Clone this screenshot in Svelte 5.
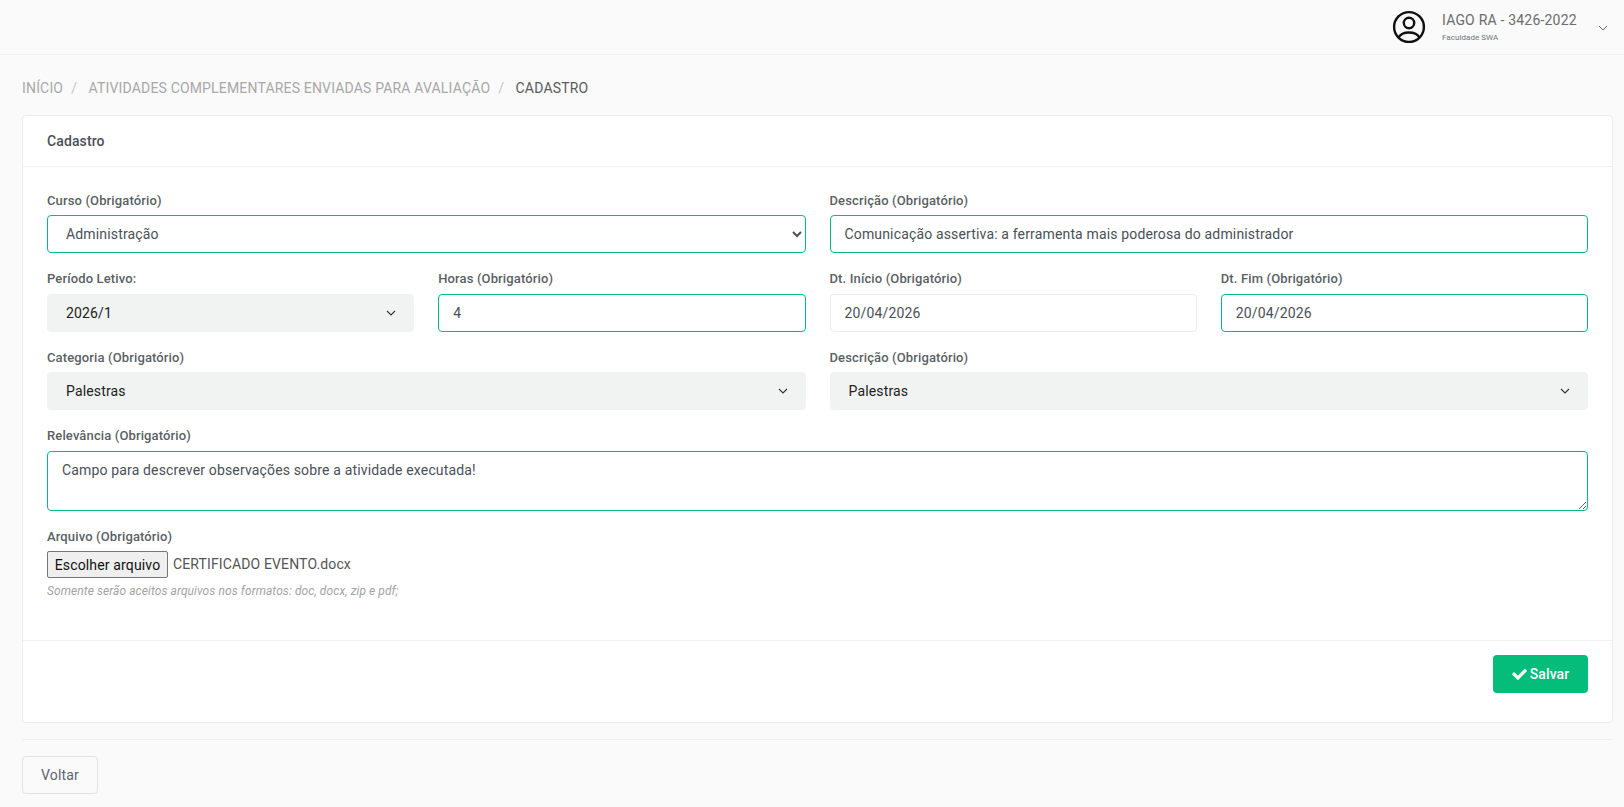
<script>
  const chevron = "M1 1l4 4 4-4";
</script>

<div class="page">
  <header class="topbar">
    <svg class="avatar" width="34" height="34" viewBox="0 0 34 34" fill="none" stroke="#111" stroke-width="2.4">
      <circle cx="17" cy="17" r="14.9" />
      <circle cx="17" cy="13" r="5.2" />
      <path d="M6.5 27.5c2-3.6 5.4-5 10.5-5s8.500 1.400 10.500 5" />
    </svg>
    <div class="user">
      <div class="name">IAGO RA - 3426-2022</div>
      <div class="school">Faculdade SWA</div>
    </div>
    <svg class="user-caret" width="10" height="6" viewBox="0 0 10 6" fill="none" stroke="#666" stroke-width="1"><path d={chevron} /></svg>
  </header>

  <main class="content">
    <nav class="crumbs">
      <span class="muted">Início</span><span class="sep">/</span><span class="muted">Atividades complementares enviadas para avaliação</span><span class="sep">/</span><span class="current">Cadastro</span>
    </nav>

    <section class="card">
      <h2 class="card-head">Cadastro</h2>
      <form class="card-body">
        <div class="grid">
          <div class="field half">
            <label for="curso">Curso (Obrigatório)</label>
            <select id="curso" class="control valid native"><option>Administração</option></select>
          </div>
          <div class="field half">
            <label for="desc">Descrição (Obrigatório)</label>
            <input id="desc" class="control valid" value="Comunicação assertiva: a ferramenta mais poderosa do administrador" />
          </div>

          <div class="field">
            <span class="label">Período Letivo:</span>
            <div class="control picker"><span>2026/1</span><svg width="10" height="6" viewBox="0 0 10 6" fill="none" stroke="#333" stroke-width="1.1"><path d={chevron} /></svg></div>
          </div>
          <div class="field">
            <label for="horas">Horas (Obrigatório)</label>
            <input id="horas" class="control valid" value="4" />
          </div>
          <div class="field">
            <label for="ini">Dt. Início (Obrigatório)</label>
            <input id="ini" class="control" value="20/04/2026" />
          </div>
          <div class="field">
            <label for="fim">Dt. Fim (Obrigatório)</label>
            <input id="fim" class="control valid" value="20/04/2026" />
          </div>

          <div class="field half">
            <span class="label">Categoria (Obrigatório)</span>
            <div class="control picker"><span>Palestras</span><svg width="10" height="6" viewBox="0 0 10 6" fill="none" stroke="#333" stroke-width="1.1"><path d={chevron} /></svg></div>
          </div>
          <div class="field half">
            <span class="label">Descrição (Obrigatório)</span>
            <div class="control picker"><span>Palestras</span><svg width="10" height="6" viewBox="0 0 10 6" fill="none" stroke="#333" stroke-width="1.1"><path d={chevron} /></svg></div>
          </div>

          <div class="field full">
            <label for="rel">Relevância (Obrigatório)</label>
            <textarea id="rel" class="control valid area">Campo para descrever observações sobre a atividade executada!</textarea>
          </div>

          <div class="field full">
            <span class="label">Arquivo (Obrigatório)</span>
            <div class="file">
              <button type="button" class="file-btn">Escolher arquivo</button>
              <span class="file-name">CERTIFICADO EVENTO.docx</span>
            </div>
            <small class="help">Somente serão aceitos arquivos nos formatos: doc, docx, zip e pdf;</small>
          </div>
        </div>
      </form>
      <div class="card-foot">
        <button type="button" class="save">
          <svg width="15" height="12" viewBox="0 0 16 13" fill="#fff"><path d="M5.600 12.700 0.300 7.400a.9.9 0 0 1 0-1.300L1.500 4.900a.9.9 0 0 1 1.300 0l3.400 3.400 7-7a.9.9 0 0 1 1.300 0l1.200 1.200a.9.9 0 0 1 0 1.300L6.900 12.700a.9.9 0 0 1-1.300 0z" /></svg>
          Salvar
        </button>
      </div>
    </section>

    <hr class="rule" />
    <button type="button" class="back">Voltar</button>
  </main>
</div>

<style>
  :global(body) {
    margin: 0;
    background: #fafafa;
    font-family: Roboto, "Liberation Sans", sans-serif;
    font-size: 14px;
    color: #495057;
  }
  .page {
    height: 807px;
    overflow: hidden;
  }
  .topbar {
    box-sizing: border-box;
    height: 55px;
    border-bottom: 1px solid #f0f0f0;
    display: flex;
    align-items: center;
    justify-content: flex-end;
    padding-right: 16px;
  }
  .avatar {
    margin-right: 16px;
  }
  .user {
    width: 150px;
  }
  .name {
    font-size: 14px;
    line-height: 20px;
    color: #6c6c6c;
    letter-spacing: 0.2px;
  }
  .school {
    font-size: 8px;
    line-height: 12px;
    margin-top: 2px;
    letter-spacing: 0.05px;
    color: #6c757d;
  }
  .user-caret {
    margin-left: 6px;
    margin-top: 1px;
  }
  .content {
    padding: 0 11px 0 22px;
  }
  .crumbs {
    height: 60px;
    box-sizing: border-box;
    padding-top: 23px;
    line-height: 21px;
    text-transform: uppercase;
    white-space: nowrap;
    letter-spacing: 0.17px;
  }
  .muted {
    color: #a8a8a8;
  }
  .sep {
    color: #c4c4c4;
    margin: 0 11.400px 0 8px;
  }
  .current {
    color: #5a5a5a;
  }
  .card {
    background: #fff;
    border: 1px solid #ececec;
    border-radius: 4px;
    height: 608px;
    box-sizing: border-box;
    display: flex;
    flex-direction: column;
  }
  .card-head {
    margin: 0;
    height: 50.6px;
    box-sizing: border-box;
    padding: 0 24px;
    border-bottom: 1px solid #f0f0f0;
    font-size: 14px;
    font-weight: 500;
    line-height: 50px;
    letter-spacing: 0.12px;
    color: #495057;
  }
  .card-body {
    padding: 24px 24px 0;
    height: 473.4px;
    box-sizing: border-box;
  }
  .grid {
    display: grid;
    grid-template-columns: repeat(4, minmax(0, 1fr));
    gap: 16px 24px;
  }
  .field {
    min-width: 0;
  }
  .half {
    grid-column: span 2;
  }
  .full {
    grid-column: 1 / -1;
  }
  label,
  .label {
    display: block;
    font-size: 13px;
    font-weight: 500;
    line-height: 19.5px;
    margin-bottom: 5px;
    letter-spacing: 0.135px;
    color: #5a5f64;
  }
  .control {
    display: block;
    box-sizing: border-box;
    width: 100%;
    height: 38px;
    padding: 0 14px;
    border: 1px solid #e9ecef;
    border-radius: 4px;
    background: #fff;
    font: 400 14px Roboto, "Liberation Sans", sans-serif;
    letter-spacing: 0.155px;
    color: #495057;
    outline: none;
  }
  .valid {
    border-color: #04bd7b;
  }
  .native {
    color: #495057;
  }
  .picker {
    display: flex;
    align-items: center;
    justify-content: space-between;
    padding: 0 17px 0 18px;
    background: #f1f2f2;
    border-color: #f1f2f2;
    color: #222;
  }
  .area {
    height: 60px;
    padding: 8px 14px;
    resize: vertical;
    line-height: 21px;
  }
  .file {
    display: flex;
    align-items: center;
    height: 27px;
  }
  .file-btn {
    box-sizing: border-box;
    width: 121px;
    height: 27px;
    padding: 0;
    border: 1px solid #767676;
    border-radius: 2px;
    background: #efefef;
    font: 400 14px Roboto, "Liberation Sans", sans-serif;
    letter-spacing: 0.15px;
    color: #111;
  }
  .file-name {
    margin: 0 0 2px 5px;
    letter-spacing: 0.13px;
    color: #555;
  }
  .help {
    display: block;
    font-size: 12px;
    font-style: italic;
    line-height: 18px;
    margin-top: 4px;
    letter-spacing: 0.08px;
    color: #a3a3a3;
  }
  .card-foot {
    border-top: 1px solid #f0f0f0;
    padding: 14px 24px;
    display: flex;
    justify-content: flex-end;
  }
  .save {
    box-sizing: border-box;
    width: 95px;
    height: 38px;
    display: flex;
    align-items: center;
    justify-content: center;
    gap: 3px;
    border: 0;
    border-radius: 4px;
    background: #04bd7b;
    color: #fff;
    font: 500 14px Roboto, "Liberation Sans", sans-serif;
    letter-spacing: 0.1px;
  }
  .rule {
    margin: 16px 0;
    border: 0;
    border-top: 1px solid #f0f0f0;
  }
  .back {
    box-sizing: border-box;
    width: 76px;
    height: 38px;
    border: 1px solid #e2e2e2;
    border-radius: 4px;
    background: transparent;
    color: #5c6670;
    font: 400 14px Roboto, "Liberation Sans", sans-serif;
    letter-spacing: 0.15px;
  }
</style>
